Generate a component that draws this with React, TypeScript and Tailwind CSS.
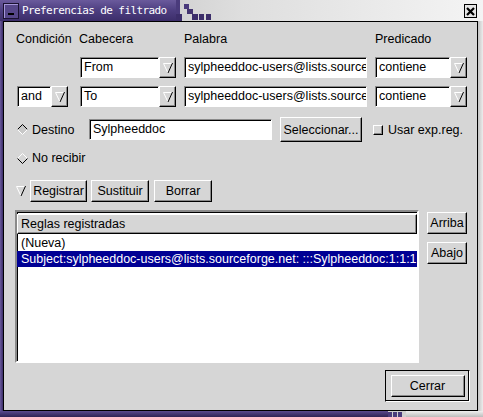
import React from 'react';

const sans = "font-['Liberation_Sans',Arial,sans-serif]";

const raised =
  'border border-t-white border-l-white border-r-black border-b-black shadow-[inset_-1px_-1px_0_#8a8a8a] bg-[#d6d6d6]';
const sunken =
  'border border-t-[#8a8a8a] border-l-[#8a8a8a] border-b-white border-r-white shadow-[inset_1px_1px_0_#000]';

const Arrow = () => (
  <svg width="10" height="12" viewBox="0 0 10 12">
    <path d="M0.5 1.5H9" stroke="#ffffff" />
    <path d="M0.5 1.5L5 11" stroke="#ffffff" />
    <path d="M9.5 1L5 11" stroke="#000000" />
  </svg>
);

const Entry = ({ value, className = '' }: { value: string; className?: string }) => (
  <div
    className={`h-[21px] bg-white ${sunken} overflow-hidden whitespace-nowrap pl-[3px] leading-[19px] ${className}`}
  >
    {value}
  </div>
);

const Combo = ({ value, className = '' }: { value: string; className?: string }) => (
  <div className={`flex h-[21px] ${className}`}>
    <Entry value={value} className="flex-1" />
    <div className={`w-[17px] h-[21px] shrink-0 ${raised} flex items-center justify-center`}>
      <Arrow />
    </div>
  </div>
);

const Button = ({ label, className = '' }: { label: string; className?: string }) => (
  <div className={`${raised} flex items-center justify-center leading-[14px] ${className}`}>{label}</div>
);

const Radio = ({ on }: { on: boolean }) => (
  <svg width="11" height="11" viewBox="0 0 11 11">
    <path d="M5.5 0.5L10.5 5.5L5.5 10.5L0.5 5.5Z" fill={on ? '#c8c8c8' : '#d6d6d6'} />
    <path d="M0.5 5.5L5.5 0.5L10.5 5.5" fill="none" stroke={on ? '#000000' : '#ffffff'} />
    <path d="M0.5 5.5L5.5 10.5L10.5 5.5" fill="none" stroke={on ? '#ffffff' : '#000000'} />
  </svg>
);

const TitleBar = () => (
  <div className="h-[21px] flex bg-gradient-to-r from-[#b4b4b4] via-[#dedede] to-[#f4f4f4]">
    <div className="w-[176px] shrink-0 h-full bg-gradient-to-b from-[#6a5a9c] via-[#4d3e80] to-[#3c2e6a] flex items-center pl-[3px]">
      <div className="w-[16px] h-[16px] shrink-0 border border-[#1a1230] bg-[#56478a] shadow-[inset_1px_1px_0_#a496d8] flex items-end justify-center pb-[3px]">
        <div className="w-[6px] h-[2px] bg-black" />
      </div>
      <span className="ml-[3px] text-white text-[11px] tracking-[-0.6px] leading-[14px] font-['DejaVu_Sans_Mono',monospace] whitespace-nowrap">
        Preferencias de filtrado
      </span>
    </div>
    <svg width="40" height="21" viewBox="0 0 40 21" className="shrink-0">
      <rect x="0" y="0" width="4" height="14" fill="#4a3b7c" />
      <rect x="0" y="14" width="6" height="7" fill="#3c2e6a" />
      <rect x="8" y="4" width="5" height="5" fill="#4a3b7c" />
      <rect x="11" y="9" width="6" height="5" fill="#43346f" />
      <rect x="16" y="14" width="6" height="6" fill="#3c2e6a" />
      <rect x="23" y="14" width="5" height="6" fill="#3c2e6a" />
      <rect x="30" y="14" width="5" height="6" fill="#3c2e6a" />
    </svg>
    <div className="flex-1" />
    <div className="mt-[4px] mr-[6px] w-[13px] h-[14px] border border-black bg-[#e6e6e6] flex items-center justify-center">
      <svg width="9" height="9" viewBox="0 0 9 9">
        <path d="M1 1L8 8M8 1L1 8" stroke="#000" strokeWidth="2.2" />
      </svg>
    </div>
  </div>
);

export default function App() {
  return (
    <div className={`w-[483px] h-[417px] flex flex-col overflow-hidden text-[12.5px] text-black ${sans}`}>
      <TitleBar />
      <div className="flex flex-1">
        <div className="w-[3px] bg-gradient-to-r from-[#6a5a9c] to-[#3c2e6a]" />
        <div className="flex-1 border border-black bg-[#d6d6d6] flex flex-col pl-[13px] pr-[7px]">
          {/* headers */}
          <div className="mt-[10px] flex h-[14px] leading-[14px]">
            <span className="w-[63px] -ml-[1px]">Condición</span>
            <span className="w-[104px]">Cabecera</span>
            <span className="w-[191px] ml-[1px]">Palabra</span>
            <span>Predicado</span>
          </div>

          {/* condition rows */}
          <div className="mt-[11px] flex">
            <div className="w-[63px]" />
            <Combo value="From" className="w-[96px]" />
            <Entry value="sylpheeddoc-users@lists.sourceforge.net" className="ml-[8px] w-[183px]" />
            <Combo value="contiene" className="ml-[8px] w-[92px]" />
          </div>
          <div className="mt-[8px] flex">
            <Combo value="and" className="w-[51px]" />
            <Combo value="To" className="ml-[12px] w-[96px]" />
            <Entry value="sylpheeddoc-users@lists.sourceforge.net" className="ml-[8px] w-[183px]" />
            <Combo value="contiene" className="ml-[8px] w-[92px]" />
          </div>

          {/* destination */}
          <div className="mt-[10px] flex items-center h-[25px]">
            <div className="w-[72px] flex items-center">
              <Radio on />
              <span className="ml-[4px] leading-[14px]">Destino</span>
            </div>
            <Entry value="Sylpheeddoc" className="w-[183px]" />
            <Button label="Seleccionar..." className="ml-[8px] w-[82px] h-[25px]" />
            <div className="ml-[11px] w-[10px] h-[10px] border border-t-white border-l-white border-r-black border-b-black shadow-[inset_-1px_-1px_0_#8a8a8a]" />
            <span className="ml-[5px] leading-[14px]">Usar exp.reg.</span>
          </div>
          <div className="mt-[9px] flex items-center h-[14px]">
            <Radio on={false} />
            <span className="ml-[4px] leading-[14px]">No recibir</span>
          </div>

          {/* action buttons */}
          <div className="mt-[15px] flex items-center h-[22px]">
            <div className="w-[13px] -ml-[1px] flex items-center">
              <Arrow />
            </div>
            <Button label="Registrar" className="w-[57px] h-[22px] ml-[1px]" />
            <Button label="Sustituir" className="ml-[4px] w-[58px] h-[22px]" />
            <Button label="Borrar" className="ml-[5px] w-[58px] h-[22px]" />
          </div>

          {/* rules list */}
          <div className="mt-[8px] flex">
            <div className={`-ml-[2px] w-[404px] h-[153px] bg-white ${sunken} border-2 p-0 flex flex-col overflow-hidden`}>
              <div className={`mt-[2px] h-[20px] ${raised} pl-[3px] flex items-center leading-[14px] shrink-0`}>
                Reglas registradas
              </div>
              <div className="mt-[1px] h-[16px] leading-[16px] pl-[4px] whitespace-nowrap">(Nueva)</div>
              <div className="h-[16px] leading-[16px] pl-[4px] whitespace-nowrap overflow-hidden bg-[#000094] text-white">
                Subject:sylpheeddoc-users@lists.sourceforge.net: :::Sylpheeddoc:1:1:1:0
              </div>
            </div>
            <div className="ml-[8px] flex flex-col">
              <Button label="Arriba" className="mt-[2px] w-[40px] h-[22px]" />
              <Button label="Abajo" className="mt-[8px] w-[40px] h-[22px]" />
            </div>
          </div>

          {/* close */}
          <div className="mt-[7px] flex justify-end">
            <div className="w-[85px] h-[32px] border border-t-black border-l-black border-b-white border-r-white shadow-[inset_-1px_-1px_0_#000] flex items-center justify-center">
              <Button label="Cerrar" className="w-[74px] h-[22px]" />
            </div>
          </div>
        </div>
        <div className="w-[5px] bg-gradient-to-r from-[#c4c4c4] to-[#ececec]" />
      </div>
      <div className="h-[6px] flex">
        <div className="w-[388px] bg-gradient-to-b from-[#5a4a8e] to-[#2e2254]" />
        <svg width="18" height="6" viewBox="0 0 18 6" className="shrink-0">
          <rect x="0" y="0" width="18" height="6" fill="#cfcfcf" />
          <rect x="0" y="1" width="4" height="5" fill="#4a3b7c" />
          <rect x="5" y="1" width="4" height="5" fill="#4a3b7c" />
          <rect x="10" y="1" width="4" height="5" fill="#4a3b7c" />
        </svg>
        <div className="flex-1 bg-gradient-to-b from-[#f0f0f0] to-[#bcbcbc]" />
      </div>
    </div>
  );
}
